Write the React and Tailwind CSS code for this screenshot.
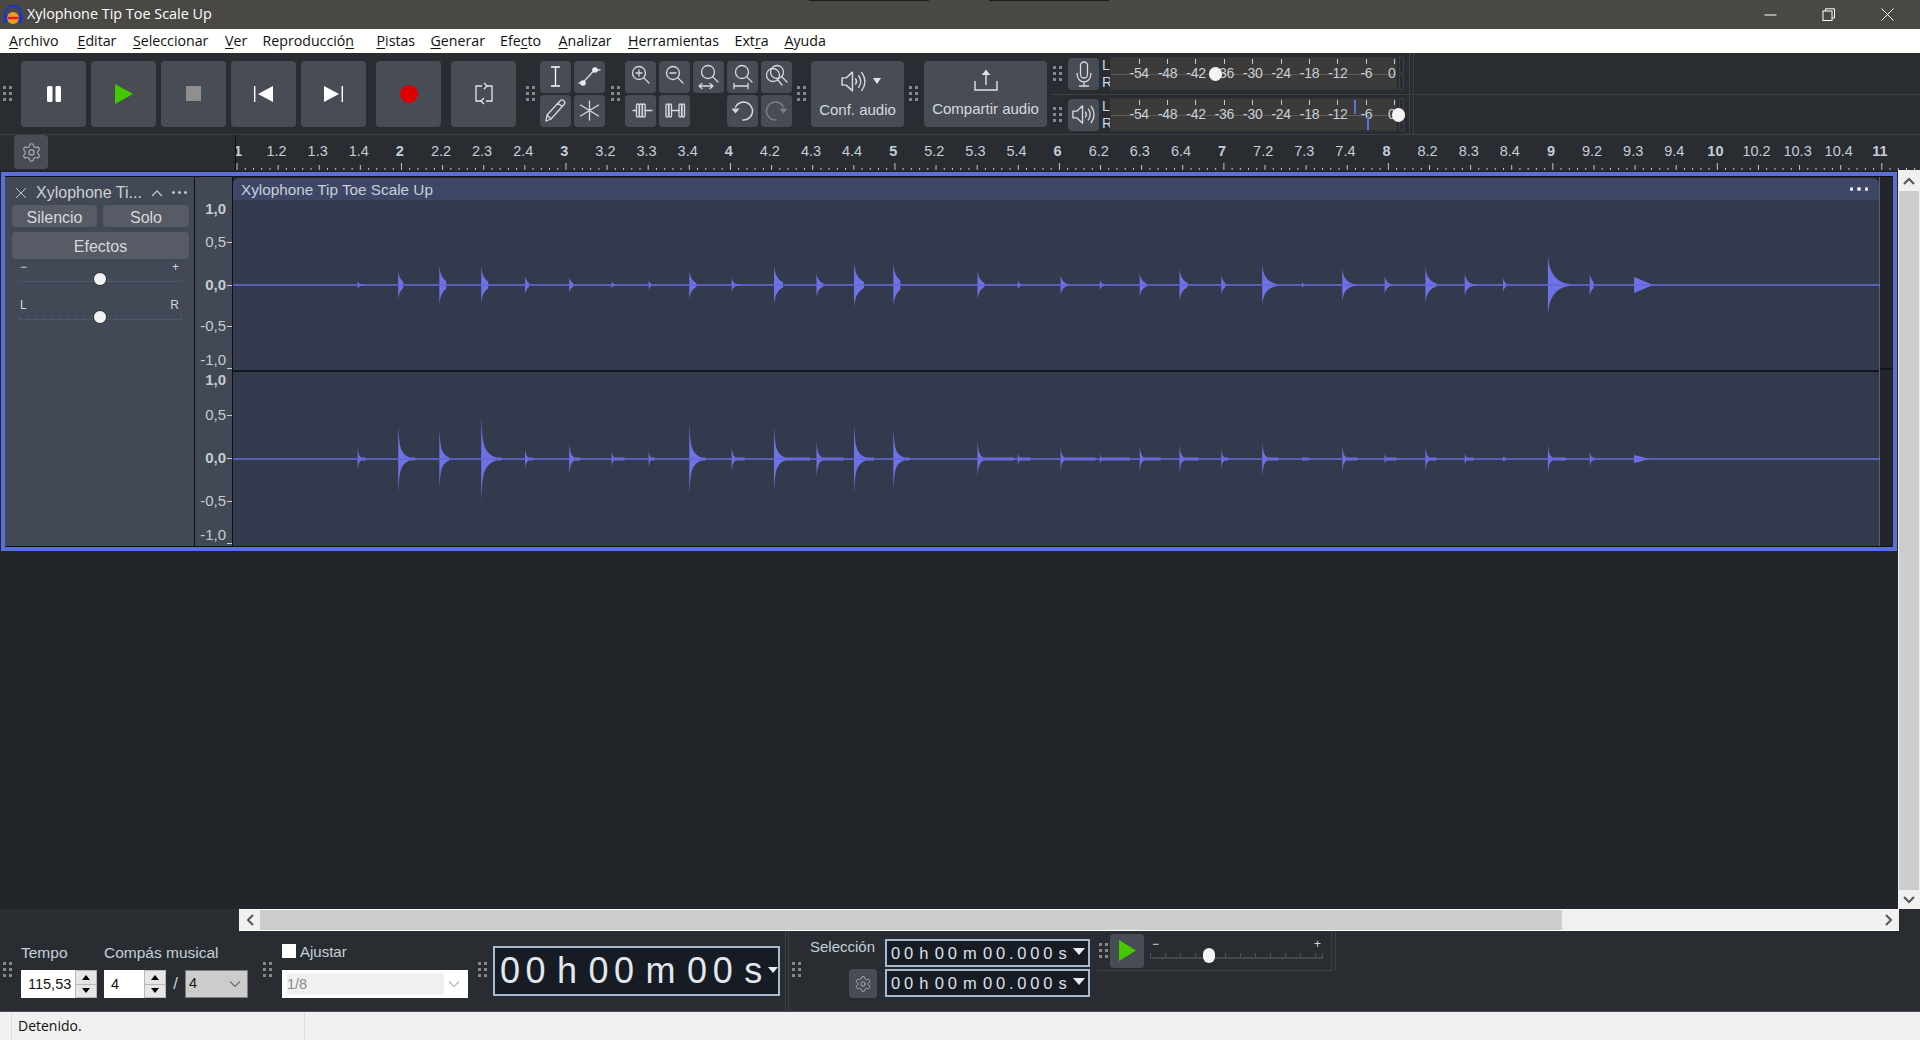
import React from "react";
import { Settings } from "lucide-react";

const SANS = "font-['Liberation_Sans',Arial,sans-serif]";
const UI = "font-['Open_Sans','Noto_Sans',sans-serif]";

const EVENTS = [
  [358.6,4,5,11,8],[399.2,14,5,34,17],[440.3,19,7,30,10],[482.2,18,7,43,20],[526,9,4,10,8],[570.2,8,4,16,11],
  [612.6,3.5,3,8,13],[649.6,4.5,3,8,6],[690.3,14,7,36,16],[732.7,7,9,12,13],[775,19,9,33,36],[817.5,12,7,18,27],
  [855,22,10,35,20],[894.3,21,7,31,16],[978.5,14,7,18,36],[1018.8,4.5,3,6,13],[1061.6,10,7,12,35],[1100.9,5,5,5,30],
  [1140.7,12,7,13,21],[1180.5,16,8,14,19],[1222.3,9.5,4,10,7],[1263.2,20,15,17,16],[1303,3,2,2,7],[1343.3,16,13,13,15],
  [1385.6,9,7,5,12],[1426.4,18,11,12,11],[1465.7,11.5,11,6,9],[1504,7,3,3,3],[1548.9,30,22,14,18,"",7],[1590.7,11.5,4,8,5],
  [1635.1,8,19,4,16,"tri"],
];

function wavePath(ampIndex, tailIndex, cy) {
  let d = "";
  for (const e of EVENTS) {
    const x0 = e[0] - 234, a = e[ampIndex], L = e[tailIndex], tri = e[5] === "tri";
    const first = ampIndex === 1;
    const tau = e[6] && first ? e[6] : first ? 1.5 + a / 5 : 1.5 + a / 10;
    const needle = first ? 0.25 : 0.5;
    const floor = first ? 1 : 1.4;
    const top = [], bottom = [];
    for (let t = 0; t <= L; t += 0.5) {
      const amp = tri
        ? a * (1 - t / L)
        : Math.max(a * (needle * Math.exp(-t / 0.9) + (1 - needle) * Math.exp(-t / tau)), floor);
      top.push(`${(x0 + t).toFixed(1)} ${(cy - amp).toFixed(1)}`);
      bottom.unshift(`${(x0 + t).toFixed(1)} ${(cy + amp).toFixed(1)}`);
    }
    d += "M" + top.join("L") + "L" + bottom.join("L") + "Z";
  }
  return d;
}

function Wave({ height, cy, a, t }) {
  return (
    <svg width="1647" height={height} className="block">
      <path d={wavePath(a, t, cy)} fill="#6e72e6" />
      <rect x="0" y={cy - 0.8} width="1647" height="1.6" fill="#6468d6" />
    </svg>
  );
}

function Grip({ className = "" }) {
  const dots = [0, 1, 2, 3, 4, 5];
  return (
    <div className={`grid grid-cols-2 gap-[3px] w-[9px] shrink-0 ${className}`}>
      {dots.map((d) => (
        <div key={d} className="w-[3px] h-[3px] bg-[#83888f]" />
      ))}
    </div>
  );
}

function Btn({ className = "", children }) {
  return (
    <div className={`flex items-center justify-center rounded-[4px] bg-[#484d55] shrink-0 ${className}`}>{children}</div>
  );
}

const Big = ({ children, ml = "" }) => <Btn className={`w-[65px] h-[66px] ${ml}`}>{children}</Btn>;

function ToolIcon({ children }) {
  return (
    <svg width="31" height="31" viewBox="0 0 31 31" fill="none" stroke="#d6d9dc" strokeWidth="1.3" strokeLinecap="round" strokeLinejoin="round">
      {children}
    </svg>
  );
}

const Loupe = ({ children, x = 14, y = 12 }) => (
  <ToolIcon>
    <circle cx={x} cy={y} r="6.5" />
    <path d={`M${x + 4.6} ${y + 4.6}L${x + 10} ${y + 10}`} />
    {children}
  </ToolIcon>
);

function Speaker({ size = 26 }) {
  return (
    <svg width={size} height={size} viewBox="0 0 26 26" fill="none" stroke="#d6d9dc" strokeWidth="1.4" strokeLinejoin="round" strokeLinecap="round">
      <path d="M2 9.5h4l6-5.5v18l-6-5.5H2z" />
      <path d="M15 10.5q2 2.5 0 5" />
      <path d="M18 7.5q4 5.5 0 11" />
      <path d="M21 4.5q6 8.5 0 17" />
    </svg>
  );
}

function Meter({ thumb, bars }) {
  const labels = ["-54", "-48", "-42", "-36", "-30", "-24", "-18", "-12", "-6", "0"];
  return (
    <div className="relative w-[287px] h-[33px] bg-[#3c3b39] ml-px shrink-0 border border-[#34363a]">
      <div className="absolute left-0 right-0 top-[16px] h-px bg-[#565b60]" />
      <div className="relative flex pl-[14px]">
        {labels.map((l) => (
          <div key={l} className="w-[28.4px] shrink-0 flex flex-col items-center">
            <div className="w-px h-[5px] mt-[1px] bg-[#c9ccce]" />
            <div className={`${SANS} text-[14px] leading-[16px] mt-[1px] text-[#c9d1d8] whitespace-nowrap tracking-[-0.3px] ${l === "0" ? "-translate-x-[3px]" : ""}`}>{l}</div>
          </div>
        ))}
      </div>
      {bars}
      {thumb}
    </div>
  );
}

function MeterRow({ border, icon, thumb, bars }) {
  return (
    <div className={`flex items-center ${border ? "h-[42px] border-b border-[#3b4045]" : "h-[39px]"}`}>
      <Grip className="ml-[2px]" />
      <Btn className="w-[31px] h-[32px] ml-[6px]">{icon}</Btn>
      <div className={`${SANS} ml-[3px] w-[7px] text-[14px] leading-[17px] text-[#d0dae3]`}>
        <div>L</div>
        <div>R</div>
      </div>
      <Meter thumb={thumb} bars={bars} />
      <div className="ml-[2px] w-[5px] h-[33px] flex flex-col gap-px">
        <div className="flex-1 border border-[#3d4146]" />
        <div className="flex-1 border border-[#3d4146]" />
      </div>
      <div className="ml-[5px] w-px self-stretch bg-[#3b4045]" />
      <div className="ml-[3px] w-px self-stretch bg-[#3b4045]" />
    </div>
  );
}

function Ruler() {
  const cells = [];
  for (let n = 1; n <= 11; n++) {
    if (n > 1) cells.push({ t: String(n), b: true });
    if (n < 11) for (const s of [2, 3, 4]) cells.push({ t: `${n}.${s}` });
  }
  const ticks = [];
  for (let i = 0; i <= 205; i++) {
    const x = i * 8.224 + 0.5;
    const h = i % 20 === 0 ? 7 : i % 5 === 0 ? 5 : 2;
    ticks.push(<rect key={i} x={x} y={8 - h} width="1" height={h} fill="#bfc5ca" />);
  }
  return (
    <div className="flex h-[35px] bg-[#292d31]">
      <div className="w-[235px] shrink-0 pl-[14px]">
        <Btn className="w-[34px] h-[34px]">
          <Settings size={21} strokeWidth={1.3} color="#a9aeb3" />
        </Btn>
      </div>
      <div className="flex-1 flex flex-col border-l border-[#0d0f12] overflow-hidden">
        <div className={`${SANS} flex pt-[8px] h-[27px] text-[14.5px] leading-[17px] text-[#c3ced8]`}>
          <div className="w-[22px] -ml-[2px] shrink-0 font-bold">1</div>
          {cells.map((c) => (
            <div key={c.t} className={`w-[41.12px] shrink-0 text-center ${c.b ? "font-bold" : ""}`}>
              {c.t}
            </div>
          ))}
        </div>
        <svg width="1685" height="8" className="block">
          {ticks}
        </svg>
      </div>
    </div>
  );
}

function TrackSlider({ left, right, mt }) {
  const ticks = [];
  for (let i = 0; i <= 20; i++) ticks.push(<rect key={i} x={i * 8.1} y="3" width="1" height="4" fill="#50566a" />);
  return (
    <div className={mt}>
      <div className={`${SANS} flex justify-between px-[3px] text-[#d0d4da] text-[12px] leading-[12px] w-[165px] ml-[12px]`}>
        <span>{left}</span>
        <span>{right}</span>
      </div>
      <div className="relative h-[18px] ml-[14px] -mt-[3px] w-[163px]">
        <svg width="163" height="8" className="absolute left-0 top-[5px]">
          <rect x="0" y="6" width="163" height="1" fill="#50566a" />
          {ticks}
        </svg>
        <div className="absolute left-[74px] top-[2px] w-[14px] h-[14px] rounded-full bg-[#f2f2f2] border border-[#2b2e35]" />
      </div>
    </div>
  );
}

function VRow({ label, mt, bold, tick, low }) {
  return (
    <div className={`flex items-center justify-end h-[16px] pr-0 ${mt}`}>
      <span className={`${SANS} text-[15px] leading-[16px] text-[#c7ccd3] ${bold ? "font-bold" : ""}`}>{label}</span>
      <span className={`ml-px h-px ${low ? "translate-y-[8px]" : ""} ${tick ? "w-[5px] bg-[#c7ccd3]" : "w-[5px]"}`} />
    </div>
  );
}

function Spin() {
  return (
    <div className="w-[22px] h-[28px] flex flex-col shrink-0 bg-[#b8b8b8] p-px gap-px">
      <div className="flex-1 bg-[#e6e6e6] flex items-center justify-center">
        <div className="w-0 h-0 border-x-[4px] border-x-transparent border-b-[5px] border-b-black" />
      </div>
      <div className="flex-1 bg-[#e6e6e6] flex items-center justify-center">
        <div className="w-0 h-0 border-x-[4px] border-x-transparent border-t-[5px] border-t-black" />
      </div>
    </div>
  );
}

const Chevron = ({ color = "#6a6a6a" }) => (
  <svg width="12" height="8" viewBox="0 0 12 8" fill="none" stroke={color} strokeWidth="1.1">
    <path d="M1 1.5l5 5 5-5" />
  </svg>
);

function SmallTime() {
  return (
    <div className="flex items-center w-[205px] h-[28px] border-2 border-[#a7b9cf] bg-[#171b24] shrink-0 pl-[4px]">
      <span className={`${SANS} text-[16.5px] leading-none text-[#dbe2ea] tracking-[3.8px] [word-spacing:-6px] whitespace-pre flex-1`}>
        00 h 00 m 00.000 s
      </span>
      <div className="w-0 h-0 border-x-[6px] border-x-transparent border-t-[7px] border-t-[#e8ebee] mr-[3px] mb-[4px]" />
    </div>
  );
}

export default function App() {
  const menus = [
    ["w-[68.5px]", "", "A", "rchivo"],
    ["w-[55.5px]", "", "E", "ditar"],
    ["w-[92px]", "", "S", "eleccionar"],
    ["w-[37.5px]", "", "V", "er"],
    ["w-[114px]", "Reproducció", "n", ""],
    ["w-[54px]", "", "P", "istas"],
    ["w-[69.5px]", "", "G", "enerar"],
    ["w-[58.5px]", "Efe", "c", "to"],
    ["w-[69.5px]", "", "A", "nalizar"],
    ["w-[106.5px]", "", "H", "erramientas"],
    ["w-[50px]", "Ext", "r", "a"],
    ["w-[60px]", "", "A", "yuda"],
  ];
  return (
    <div className="w-[1920px] h-[1040px] flex flex-col overflow-hidden bg-[#22262a]">
      {/* Title bar */}
      <div className="relative h-[29px] shrink-0 flex items-center bg-[#4a4845] text-white">
        <div className="absolute left-[809px] top-0 w-[120px] h-px bg-[#1d1d1d]" />
        <div className="absolute left-[989px] top-0 w-[120px] h-px bg-[#1d1d1d]" />
        <svg width="22" height="22" viewBox="0 0 22 22" className="ml-[2px] shrink-0">
          <path d="M3.5 13.5C2 5.5 6 2 11 2s9 3.5 7.500 11.500" fill="none" stroke="#1634d8" strokeWidth="2" />
          <rect x="1.500" y="11" width="4" height="8" rx="2" fill="#1634d8" />
          <rect x="16.500" y="11" width="4" height="8" rx="2" fill="#1634d8" />
          <ellipse cx="11" cy="14" rx="6" ry="6" fill="#e9a020" />
          <path d="M5.500 14h11" stroke="#e21b1b" strokeWidth="2.400" />
        </svg>
        <span className={`${UI} ml-[3px] text-[14.4px] leading-none whitespace-nowrap`}>Xylophone Tip Toe Scale Up</span>
        <div className="ml-auto flex pr-[3px]">
          <div className="w-[58px] flex justify-center">
            <svg width="13" height="13" viewBox="0 0 13 13" stroke="#fff" fill="none"><path d="M0.500 7h12" /></svg>
          </div>
          <div className="w-[58px] flex justify-center">
            <svg width="13" height="13" viewBox="0 0 13 13" stroke="#fff" fill="none"><rect x="1" y="3" width="9" height="9.500" /><path d="M3.500 3V0.800h9V10H10" /></svg>
          </div>
          <div className="w-[60px] flex justify-center">
            <svg width="13" height="13" viewBox="0 0 13 13" stroke="#fff" fill="none"><path d="M0.500 0.500l12 12M12.500 0.500l-12 12" /></svg>
          </div>
        </div>
      </div>

      {/* Menu bar */}
      <div className={`${UI} h-[24px] shrink-0 flex items-center bg-white pl-[9px] text-[14.2px] leading-none text-[#111]`}>
        {menus.map(([w, a, u, b]) => (
          <span key={a + u + b} className={`${w} shrink-0 whitespace-nowrap`}>
            {a}
            <span className="underline underline-offset-2">{u}</span>
            {b}
          </span>
        ))}
      </div>

      {/* Main toolbar */}
      <div className="h-[82px] shrink-0 flex items-center bg-[#292d31] border-b border-[#3b4045] pl-[3px]">
        <Grip />
        <div className="flex ml-[9px] gap-[5px]">
          <Big>
            <svg width="16" height="16" viewBox="0 0 16 16" fill="#fff"><rect x="1" y="0" width="5.500" height="16" rx="1.500" /><rect x="9.500" y="0" width="5.500" height="16" rx="1.500" /></svg>
          </Big>
          <Big>
            <svg width="18" height="20" viewBox="0 0 18 20" fill="#44c900"><path d="M0 0l18 10L0 20z" /></svg>
          </Big>
          <Big>
            <div className="w-[15px] h-[15px] bg-[#8f8f8f]" />
          </Big>
          <Big>
            <svg width="19" height="16" viewBox="0 0 19 16" fill="#fff"><rect x="0" y="0" width="1.400" height="16" /><path d="M19 0v16L4 8z" /></svg>
          </Big>
          <Big>
            <svg width="19" height="16" viewBox="0 0 19 16" fill="#fff"><rect x="17.600" y="0" width="1.400" height="16" /><path d="M0 0v16l15-8z" /></svg>
          </Big>
          <Big ml="ml-[5px]">
            <div className="w-[18px] h-[18px] rounded-full bg-[#dd0000]" />
          </Big>
          <Big ml="ml-[5px]">
            <svg width="20" height="23" viewBox="0 0 20 23" fill="none" stroke="#e4e6e8" strokeWidth="1.300">
              <path d="M8 4H2v15h5M12 19h6V4h-5" />
              <path d="M10 1l3 3-3 3M10 16l-3 3 3 3" />
            </svg>
          </Big>
        </div>
        <Grip className="ml-[10px]" />
        <div className="grid grid-cols-[31px_31px] gap-x-[3px] gap-y-[2px] ml-[5px]">
          <Btn className="h-[32px] bg-[#6f7780]">
            <ToolIcon>
              <path d="M11.500 6h8M11.500 25h8M15.500 6v19" stroke="#fff" />
            </ToolIcon>
          </Btn>
          <Btn className="h-[32px]">
            <ToolIcon>
              <path d="M5 22h3.500l12-13H26" />
              <circle cx="9" cy="22" r="2.800" fill="#e8eaec" stroke="none" />
              <circle cx="21" cy="9" r="2.800" fill="#e8eaec" stroke="none" />
            </ToolIcon>
          </Btn>
          <Btn className="h-[32px]">
            <ToolIcon>
              <path d="M7 20L20 6a2.500 2.500 0 0 1 4 3.500L11 24l-5 2zM18 8l4 3.500M7 20l4 4" />
            </ToolIcon>
          </Btn>
          <Btn className="h-[32px]">
            <ToolIcon>
              <path d="M15.500 6v19M6.500 10l18 11M24.500 10l-18 11" />
            </ToolIcon>
          </Btn>
        </div>
        <Grip className="ml-[6px]" />
        <div className="grid grid-cols-[repeat(5,31px)] gap-x-[3px] gap-y-[2px] ml-[5px]">
          <Btn className="h-[32px]">
            <Loupe>
              <path d="M11 12h6M14 9v6" />
            </Loupe>
          </Btn>
          <Btn className="h-[32px]">
            <Loupe>
              <path d="M11 12h6" />
            </Loupe>
          </Btn>
          <Btn className="h-[32px]">
            <Loupe x={15} y={11}>
              <path d="M6 25h14M9 22.500L6 25l3 2.500M17 22.500l3 2.500-3 2.500" />
            </Loupe>
          </Btn>
          <Btn className="h-[32px]">
            <Loupe x={15} y={11}>
              <path d="M7 25h14M7 22.500v5M21 22.500v5" />
            </Loupe>
          </Btn>
          <Btn className="h-[32px]">
            <ToolIcon>
              <circle cx="12" cy="14" r="6.500" />
              <circle cx="16" cy="11" r="6.500" />
              <path d="M20.500 15.500L26 21M16.500 18.500L21 24" />
            </ToolIcon>
          </Btn>
          <Btn className="h-[32px]">
            <ToolIcon>
              <path d="M8 15.500h3.500M20 15.500h7" />
              <rect x="11.500" y="9" width="2.700" height="13" rx="1.300" />
              <rect x="14.500" y="9" width="2.700" height="13" rx="1.300" />
              <rect x="17.500" y="9" width="2.700" height="13" rx="1.300" />
            </ToolIcon>
          </Btn>
          <Btn className="h-[32px]">
            <ToolIcon>
              <rect x="7" y="9" width="2.500" height="13" rx="1.200" />
              <rect x="10" y="9" width="2.500" height="13" rx="1.200" />
              <path d="M12.500 15.500h7.500" />
              <rect x="20" y="9" width="2.500" height="13" rx="1.200" />
              <rect x="23" y="9" width="2.500" height="13" rx="1.200" />
            </ToolIcon>
          </Btn>
          <div />
          <Btn className="h-[32px]">
            <ToolIcon>
              <path d="M16 25A9 9 0 1 0 8.500 12" strokeWidth="1.500" />
              <path d="M4.500 13.500h8l-4 5z" fill="#d6d9dc" stroke="none" />
            </ToolIcon>
          </Btn>
          <Btn className="h-[32px]">
            <ToolIcon>
              <path d="M15 25A9 9 0 1 1 22.500 12" stroke="#7a7f85" strokeWidth="1.500" />
              <path d="M26.500 13.500h-8l4 5z" fill="#7a7f85" stroke="none" />
            </ToolIcon>
          </Btn>
        </div>
        <Grip className="ml-[5px]" />
        <Btn className={`${SANS} w-[93px] h-[66px] ml-[5px] flex-col text-[15px] leading-[18px] text-[#d2d9df]`}>
          <div className="flex items-center h-[30px] pl-[6px] gap-[6px] -mt-[2px]">
            <Speaker size={27} />
            <div className="w-0 h-0 border-x-[4px] border-x-transparent border-t-[6px] border-t-[#e2e4e6]" />
          </div>
          <div className="mt-[5px]">Conf. audio</div>
        </Btn>
        <Grip className="ml-[5px]" />
        <Btn className={`${SANS} w-[123px] h-[66px] ml-[6px] flex-col text-[15px] leading-[18px] text-[#d2d9df]`}>
          <svg width="26" height="24" viewBox="0 0 26 24" fill="none" stroke="#e0e3e6" strokeWidth="1.400" className="-mt-[2px]">
            <path d="M2 13v9h22v-9M13 17V2" />
            <path d="M8.500 7L13 2l4.500 5z" fill="#e0e3e6" stroke="none" />
          </svg>
          <div className="mt-[8px]">Compartir audio</div>
        </Btn>
        <div className="flex-1 ml-[4px] self-stretch flex flex-col">
          <MeterRow
            border
            icon={
              <svg width="24" height="28" viewBox="0 0 24 28" fill="none" stroke="#d6d9dc" strokeWidth="1.300">
                <rect x="8.500" y="2" width="7" height="16" rx="3.500" />
                <path d="M5 13c0 12 14 12 14 0M12 22v4M7 26h10" />
              </svg>
            }
            thumb={<div className="absolute left-[98px] top-[9px] w-[13px] h-[14px] rounded-full bg-[#f4f4f4]" />}
          />
          <MeterRow
            icon={<Speaker size={25} />}
            thumb={<div className="absolute left-[281px] top-[9px] w-[13px] h-[14px] rounded-full bg-[#f4f4f4]" />}
            bars={
              <>
                <div className="absolute left-[243px] top-[1px] w-[2px] h-[14px] bg-[#5a6fd8]" />
                <div className="absolute left-[256px] top-[17px] w-[2px] h-[14px] bg-[#5a6fd8]" />
              </>
            }
          />
        </div>
      </div>

      <Ruler />

      {/* Track + scrollbar */}
      <div className="flex-1 min-h-0 flex">
        <div className="flex-1 pt-[2px] pl-px min-w-0">
          <div className="w-[1896px] h-[379px] border-[4px] border-[#5a70d8] bg-[#0f1114] py-px flex">
            {/* Track control */}
            <div className="w-[189px] shrink-0 bg-[#424855] pt-[3px]">
              <div className="flex items-center h-[25px] text-[#cdd1d7]">
                <svg width="12" height="12" viewBox="0 0 12 12" stroke="#c0c4ca" fill="none" className="ml-[10px]"><path d="M1 1l10 10M11 1L1 11" /></svg>
                <span className={`${SANS} ml-[9px] text-[16px] leading-none whitespace-nowrap w-[115px]`}>Xylophone Ti...</span>
                <svg width="12" height="8" viewBox="0 0 12 8" stroke="#c0c4ca" fill="none" strokeWidth="1.300"><path d="M1 7l5-5 5 5" /></svg>
                <div className="flex gap-[3px] ml-[9px]">
                  <div className="w-[3px] h-[3px] rounded-full bg-[#c0c4ca]" />
                  <div className="w-[3px] h-[3px] rounded-full bg-[#c0c4ca]" />
                  <div className="w-[3px] h-[3px] rounded-full bg-[#c0c4ca]" />
                </div>
              </div>
              <div className={`${SANS} pl-[7px] pr-[5px] text-[16px] leading-none text-[#d5d8dc]`}>
                <div className="flex gap-[6px]">
                  <div className="w-[85px] h-[22px] pt-[3px] rounded-[4px] bg-[#565b65] flex items-center justify-center">Silencio</div>
                  <div className="w-[86px] h-[22px] pt-[3px] rounded-[4px] bg-[#565b65] flex items-center justify-center">Solo</div>
                </div>
                <div className="mt-[5px] h-[27px] pt-[2px] rounded-[4px] bg-[#565b65] flex items-center justify-center">Efectos</div>
              </div>
              <TrackSlider left="−" right="+" mt="mt-[2px]" />
              <TrackSlider left="L" right="R" mt="mt-[11px]" />
            </div>
            <div className="w-px shrink-0 bg-[#0f1114]" />
            {/* Vertical ruler */}
            <div className="w-[37px] shrink-0 bg-[#424855]">
              <VRow label="1,0" bold mt="mt-[24px]" />
              <VRow label="0,5" tick mt="mt-[17px]" />
              <VRow label="0,0" bold tick mt="mt-[27px]" />
              <VRow label="-0,5" tick mt="mt-[25px]" />
              <VRow label="-1,0" tick low mt="mt-[18px]" />
              <VRow label="1,0" bold mt="mt-[4px]" />
              <VRow label="0,5" tick mt="mt-[19px]" />
              <VRow label="0,0" bold tick mt="mt-[27px]" />
              <VRow label="-0,5" tick mt="mt-[27px]" />
              <VRow label="-1,0" tick low mt="mt-[18px]" />
            </div>
            <div className="w-px shrink-0 bg-[#0f1114]" />
            {/* Clip */}
            <div className="w-[1647px] shrink-0 flex flex-col bg-[#22262a] border-r border-[#5b606c]">
              <div className="h-[22px] mt-px flex items-center justify-between bg-[#3e4866] rounded-t-[6px] pl-[8px] pr-[11px]">
                <span className={`${SANS} pt-[2px] text-[15.3px] leading-none text-[#c9ced8] whitespace-nowrap`}>Xylophone Tip Toe Scale Up</span>
                <div className="flex gap-[4px]">
                  <div className="w-[3.500px] h-[3.500px] rounded-full bg-[#e8e8ee]" />
                  <div className="w-[3.500px] h-[3.500px] rounded-full bg-[#e8e8ee]" />
                  <div className="w-[3.500px] h-[3.500px] rounded-full bg-[#e8e8ee]" />
                </div>
              </div>
              <div className="h-[170px] bg-[#343a4d]">
                <Wave height={170} cy={85} a={1} t={2} />
              </div>
              <div className="h-[2px] bg-[#14161b]" />
              <div className="flex-1 bg-[#343a4d]">
                <Wave height={174} cy={87} a={3} t={4} />
              </div>
            </div>
            <div className="flex-1 flex flex-col bg-[#22262a]">
              <div className="h-[193px] border-b-2 border-[#14161b]" />
            </div>
          </div>
        </div>
        {/* Vertical scrollbar */}
        <div className="w-[22px] shrink-0 flex flex-col bg-[#f0f0f0]">
          <div className="h-[21px] flex items-center justify-center bg-[#f0f0f0]">
            <svg width="12" height="8" viewBox="0 0 12 8" stroke="#555" fill="none" strokeWidth="2"><path d="M1 7l5-5 5 5" /></svg>
          </div>
          <div className="flex-1 mx-px bg-[#cdcdcd]" />
          <div className="h-[19px] flex items-center justify-center">
            <svg width="12" height="8" viewBox="0 0 12 8" stroke="#555" fill="none" strokeWidth="2"><path d="M1 1l5 5 5-5" /></svg>
          </div>
        </div>
      </div>

      {/* Horizontal scrollbar row */}
      <div className="h-[22px] shrink-0 bg-[#292d31] pl-[239px]">
        <div className="w-[1660px] h-[22px] flex bg-[#f0f0f0] border-y border-white">
          <div className="w-[21px] flex items-center justify-center">
            <svg width="8" height="12" viewBox="0 0 8 12" stroke="#555" fill="none" strokeWidth="2"><path d="M7 1L2 6l5 5" /></svg>
          </div>
          <div className="w-[1302px] bg-[#cdcdcd]" />
          <div className="flex-1 flex items-center justify-end pr-[6px]">
            <svg width="8" height="12" viewBox="0 0 8 12" stroke="#555" fill="none" strokeWidth="2"><path d="M1 1l5 5-5 5" /></svg>
          </div>
        </div>
      </div>

      {/* Bottom toolbar */}
      <div className={`${SANS} h-[81px] shrink-0 flex items-start bg-[#292d31] border-b border-[#4a4e52] text-[#c3d0dc]`}>
        <Grip className="ml-[3px] mt-[31px]" />
        <div className="ml-[9px] w-[76px] mt-[12px] shrink-0">
          <div className="h-[20px] text-[15.5px] leading-[20px]">Tempo</div>
          <div className="flex mt-[7px]">
            <div className="w-[54px] h-[28px] bg-white text-[#111] text-[14.5px] leading-[28px] pl-[7px] whitespace-nowrap overflow-hidden">115,53</div>
            <Spin />
          </div>
        </div>
        <div className="ml-[7px] w-[144px] mt-[12px] shrink-0">
          <div className="h-[20px] text-[15.500px] leading-[20px] whitespace-nowrap">Compás musical</div>
          <div className="flex mt-[7px] items-center">
            <div className="w-[40px] h-[28px] bg-white text-[#111] text-[14.5px] leading-[28px] pl-[7px]">4</div>
            <Spin />
            <div className="w-[19px] text-center text-[17px]">/</div>
            <div className="w-[63px] h-[28px] bg-[#cccccc] border border-[#7d7d7d] text-[#111] text-[14.500px] flex items-center justify-between pl-[3px] pr-[6px]">
              <span>4</span>
              <Chevron />
            </div>
          </div>
        </div>
        <Grip className="ml-[15px] mt-[31px]" />
        <div className="ml-[10px] w-[186px] shrink-0 mt-[13px]">
          <div className="flex items-center h-[14px] gap-[4px]">
            <div className="w-[14px] h-[14px] bg-white" />
            <span className="text-[15px] leading-none">Ajustar</span>
          </div>
          <div className="mt-[12px] h-[28px] bg-white flex items-center pl-[5px] pr-[8px]">
            <div className="w-[157px] h-[22px] bg-[#f0f0f0] text-[#8a8a8a] text-[14.5px] leading-[22px]">1/8</div>
            <div className="ml-auto">
              <Chevron color="#b5b5b5" />
            </div>
          </div>
        </div>
        <Grip className="ml-[10px] mt-[31px]" />
        <div className="ml-[6px] mt-[15px] w-[287px] h-[50px] shrink-0 flex items-center border-2 border-[#a7b9cf] bg-[#171b24] pl-[5px]">
          <span className="text-[36px] leading-none text-[#e2e8ee] tracking-[5.5px] [word-spacing:-9.5px] whitespace-pre flex-1">00 h 00 m 00 s</span>
          <div className="w-0 h-0 border-x-[5px] border-x-transparent border-t-[6px] border-t-[#e8ebee] mr-[3px] mb-[3px]" />
        </div>
        <div className="ml-[5px] w-px h-[80px] bg-[#3b4045]" />
        <div className="ml-[2px] w-px h-[80px] bg-[#3b4045]" />
        <Grip className="ml-[3px] mt-[31px]" />
        <div className="ml-[9px] mt-[8px] grid grid-cols-[67px_205px] gap-x-[8px] gap-y-[2px] shrink-0">
          <div className="h-[28px] text-[15px] leading-[16px] whitespace-nowrap">Selección</div>
          <SmallTime />
          <Btn className="h-[29px] w-[28px] ml-auto">
            <Settings size={18} strokeWidth={1.3} color="#a9aeb3" />
          </Btn>
          <SmallTime />
        </div>
        <div className="ml-[7px] w-[234px] h-[40px] pl-[2px] flex items-center shrink-0 border-b border-[#3b4045]">
          <Grip />
          <Btn className="ml-[2px] w-[34px] h-[34px]">
            <svg width="17" height="21" viewBox="0 0 17 21" fill="#44c900"><path d="M0 0l17 10.500L0 21z" /></svg>
          </Btn>
          <div className="relative ml-[6px] w-[173px] h-[34px] pt-[4px]">
            <div className="flex justify-between px-[2px] text-[12px] leading-[12px] text-[#d5d8dc]">
              <span>−</span>
              <span>+</span>
            </div>
            <svg width="173" height="10" className="absolute left-0 top-[16px]">
              <rect x="0" y="7" width="173" height="2" fill="#42464d" />
              {[0, 15, 30, 45, 60, 75, 90, 105, 120, 135, 150, 165, 172].map((x) => (
                <rect key={x} x={x} y="3" width="1" height="4" fill="#4d5259" />
              ))}
            </svg>
            <div className="absolute left-[53px] top-[14px] w-[12px] h-[15px] rounded-full bg-[#f4f4f4]" />
          </div>
        </div>
        <div className="w-px h-[40px] bg-[#3b4045]" />
        <div className="ml-[3px] w-px h-[40px] bg-[#3b4045]" />
      </div>

      {/* Status bar */}
      <div className={`${UI} h-[28px] shrink-0 flex bg-[#f0f0f0] text-[14px] text-[#111]`}>
        <div className="ml-[11px] w-[294px] border-x border-[#dcdcdc] pl-[6px] leading-[28px]">Detenido.</div>
      </div>
    </div>
  );
}
